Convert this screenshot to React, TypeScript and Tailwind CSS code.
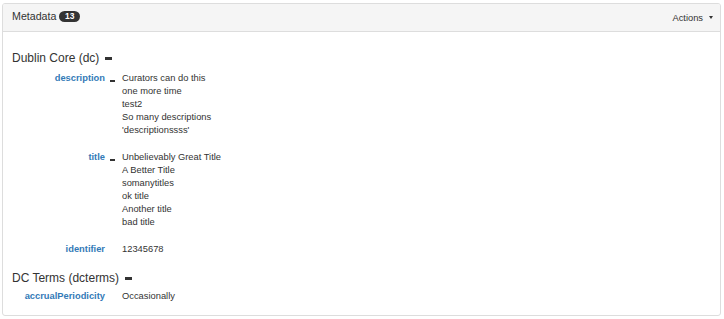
import React from "react";

const FONT = { fontFamily: '"Liberation Sans", Arial, Helvetica, sans-serif' };

type Field = { name: string; values: string[]; collapsible: boolean };

const dc: Field[] = [
  {
    name: "description",
    values: [
      "Curators can do this",
      "one more time",
      "test2",
      "So many descriptions",
      "'descriptionssss'",
    ],
    collapsible: true,
  },
  {
    name: "title",
    values: [
      "Unbelievably Great Title",
      "A Better Title",
      "somanytitles",
      "ok title",
      "Another title",
      "bad title",
    ],
    collapsible: true,
  },
  { name: "identifier", values: ["12345678"], collapsible: false },
];

const dcterms: Field[] = [
  { name: "accrualPeriodicity", values: ["Occasionally"], collapsible: false },
];

function Heading({ text }: { text: string }) {
  return (
    <div className="flex items-start">
      <span className="text-[12px] leading-[14px] text-[#333]">{text}</span>
      <span className="ml-[6px] mt-[6px] h-[3px] w-[7px] bg-[#333]" />
    </div>
  );
}

function Row({ f, last }: { f: Field; last: boolean }) {
  return (
    <div className={`flex ${last ? "" : "mb-[14px]"}`}>
      <div className="w-[93px] shrink-0 text-right text-[9.33px] font-bold leading-[13px] text-[#337ab7]">
        {f.name}
      </div>
      <div className="w-[17px] shrink-0 pl-[5px]">
        {f.collapsible && <div className="mt-[8px] h-[2px] w-[5px] bg-[#333]" />}
      </div>
      <div className="flex flex-col text-[9.33px] leading-[13px] text-[#333]">
        {f.values.map((v, i) => (
          <span key={i}>{v}</span>
        ))}
      </div>
    </div>
  );
}

export default function App() {
  return (
    <div className="h-[319px] w-[724px] bg-white pl-[2px] pr-[3px] pt-[3px]" style={FONT}>
      <div className="rounded-[3px] border border-[#ddd] bg-white">
        <div className="flex h-[28px] items-center justify-between rounded-t-[2px] border-b border-[#ddd] bg-[#f5f5f5] pl-[9px] pr-[7px]">
          <div className="flex items-center gap-[3px] pb-[3px]">
            <span className="text-[10.67px] leading-[12px] text-[#333]">Metadata</span>
            <span className="flex h-[11px] items-center rounded-full bg-[#333] px-[5.5px] text-[8.5px] font-bold leading-[11px] text-white">
              13
            </span>
          </div>
          <div className="flex items-center">
            <span className="text-[9.33px] leading-[12px] text-[#333]">Actions</span>
            <span className="ml-[6px] h-0 w-0 border-x-[2.5px] border-t-[3px] border-x-transparent border-t-[#333]" />
          </div>
        </div>
        <div className="px-[9px] pb-[12px] pt-[19px]">
          <Heading text="Dublin Core (dc)" />
          <div className="mt-[6.67px]">
            {dc.map((f, i) => (
              <Row key={f.name} f={f} last={i === dc.length - 1} />
            ))}
          </div>
          <div className="mt-[15px]">
            <Heading text="DC Terms (dcterms)" />
          </div>
          <div className="mt-[5px]">
            {dcterms.map((f, i) => (
              <Row key={f.name} f={f} last={i === dcterms.length - 1} />
            ))}
          </div>
        </div>
      </div>
    </div>
  );
}
